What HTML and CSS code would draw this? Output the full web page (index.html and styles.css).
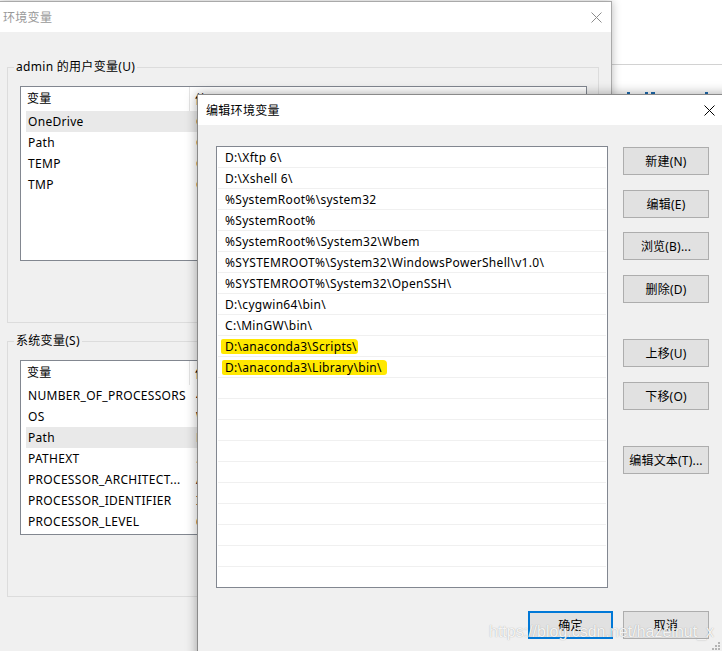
FILE: index.html
```html
<!DOCTYPE html>
<html lang="zh-CN">
<head>
<meta charset="utf-8">
<title>环境变量</title>
<link rel="stylesheet" href="styles.css">
</head>
<body>
<div class="desktop">
  <div class="behind">
    <div class="behind-top"></div>
    <div class="behind-marks"><span class="mk mk1"></span><span class="mk mk2"></span><span class="mk mk3"></span><span class="mk mk4"></span></div>
  </div>

  <section class="win env">
    <header class="titlebar env-bar">
      <span class="title env-title">环境变量</span>
      <span class="close env-close"><svg width="11" height="11" viewBox="0 0 11 11"><path d="M0.5 0.5L10.5 10.5M10.5 0.5L0.5 10.5" stroke="#8c8c8c" stroke-width="1" fill="none"/></svg></span>
    </header>
    <div class="env-body">
      <fieldset class="group">
        <legend>admin 的用户变量(U)</legend>
        <div class="lv lv-user">
          <div class="lv-head"><span class="c1">变量</span><span class="c2">值</span></div>
          <div class="lv-row sel"><span class="c1">OneDrive</span><span class="c2">C:</span></div>
          <div class="lv-row"><span class="c1">Path</span><span class="c2">C:</span></div>
          <div class="lv-row"><span class="c1">TEMP</span><span class="c2">C:</span></div>
          <div class="lv-row"><span class="c1">TMP</span><span class="c2">C:</span></div>
        </div>
      </fieldset>
      <fieldset class="group group-sys">
        <legend>系统变量(S)</legend>
        <div class="lv lv-sys">
          <div class="lv-head"><span class="c1">变量</span><span class="c2">值</span></div>
          <div class="lv-row"><span class="c1">NUMBER_OF_PROCESSORS</span><span class="c2">4</span></div>
          <div class="lv-row"><span class="c1">OS</span><span class="c2">W</span></div>
          <div class="lv-row sel"><span class="c1">Path</span><span class="c2">D</span></div>
          <div class="lv-row"><span class="c1">PATHEXT</span><span class="c2">.</span></div>
          <div class="lv-row"><span class="c1">PROCESSOR_ARCHITECT...</span><span class="c2">A</span></div>
          <div class="lv-row"><span class="c1">PROCESSOR_IDENTIFIER</span><span class="c2">I</span></div>
          <div class="lv-row"><span class="c1">PROCESSOR_LEVEL</span><span class="c2">6</span></div>
        </div>
      </fieldset>
    </div>
  </section>

  <section class="win edit">
    <header class="titlebar edit-bar">
      <span class="title">编辑环境变量</span>
      <span class="close edit-close"><svg width="11" height="11" viewBox="0 0 11 11"><path d="M0.5 0.5L10.5 10.5M10.5 0.5L0.5 10.5" stroke="#000" stroke-width="1" fill="none"/></svg></span>
    </header>
    <div class="edit-body">
      <div class="pathlist">
        <div class="p-row">D:\Xftp 6\</div>
        <div class="p-row">D:\Xshell 6\</div>
        <div class="p-row">%SystemRoot%\system32</div>
        <div class="p-row">%SystemRoot%</div>
        <div class="p-row">%SystemRoot%\System32\Wbem</div>
        <div class="p-row">%SYSTEMROOT%\System32\WindowsPowerShell\v1.0\</div>
        <div class="p-row">%SYSTEMROOT%\System32\OpenSSH\</div>
        <div class="p-row">D:\cygwin64\bin\</div>
        <div class="p-row">C:\MinGW\bin\</div>
        <div class="p-row"><span class="hl">D:\anaconda3\Scripts\</span></div>
        <div class="p-row"><span class="hl hl2">D:\anaconda3\Library\bin\</span></div>
        <div class="p-row"></div>
        <div class="p-row"></div>
        <div class="p-row"></div>
        <div class="p-row"></div>
        <div class="p-row"></div>
        <div class="p-row"></div>
        <div class="p-row"></div>
        <div class="p-row"></div>
        <div class="p-row"></div>
        <div class="p-row"></div>
      </div>
      <div class="side">
        <button class="btn">新建(N)</button>
        <button class="btn">编辑(E)</button>
        <button class="btn">浏览(B)...</button>
        <button class="btn">删除(D)</button>
        <button class="btn btn-sep">上移(U)</button>
        <button class="btn">下移(O)</button>
        <button class="btn btn-sep">编辑文本(T)...</button>
      </div>
      <div class="footer">
        <button class="btn btn-ok">确定</button>
        <button class="btn">取消</button>
      </div>
    </div>
  </section>

  <div class="watermark">https://blog.csdn.net/hazelnut_x</div>
  <svg class="grip" width="8" height="8" viewBox="0 0 8 8"><rect x="6" y="0" width="2" height="2" fill="#b4b4b4"/><rect x="3" y="3" width="2" height="2" fill="#b4b4b4"/><rect x="6" y="3" width="2" height="2" fill="#b4b4b4"/><rect x="0" y="6" width="2" height="2" fill="#b4b4b4"/><rect x="3" y="6" width="2" height="2" fill="#b4b4b4"/><rect x="6" y="6" width="2" height="2" fill="#b4b4b4"/></svg>
</div>
</body>
</html>
```

FILE: styles.css
```css
* { box-sizing: border-box; }

html, body {
  margin: 0;
  padding: 0;
}

body {
  width: 722px;
  height: 651px;
  overflow: hidden;
  background: #fff;
  font-family: "Noto Sans", "Noto Sans CJK SC", sans-serif;
  font-size: 12px;
  letter-spacing: 0.3px;
  color: #000;
}

.desktop {
  position: relative;
  width: 722px;
  height: 651px;
  overflow: hidden;
  background: #fff;
}

/* app behind both windows (right strip) */
.behind {
  position: absolute;
  left: 611px;
  top: 0;
  width: 111px;
  height: 651px;
  background: #fff;
}
.behind-top {
  height: 65px;
  border-bottom: 1px solid #d2d2d2;
}
.behind-marks {
  display: flex;
  margin-top: 27px;
  height: 4px;
}
.mk {
  display: block;
  height: 4px;
  width: 3px;
  background: #1f6cb0;
}
.mk1 { margin-left: 16px; }
.mk2 { margin-left: 15px; }
.mk3 { margin-left: 3px; width: 4px; }
.mk4 { margin-left: 50px; }

/* windows */
.win {
  position: absolute;
  display: flex;
  flex-direction: column;
}

.env {
  left: -1px;
  top: 1px;
  width: 613px;
  height: 660px;
  border: 1px solid #a9a9a9;
  background: #f0f0f0;
  box-shadow: 0 0 9px rgba(0, 0, 0, 0.28);
}

.titlebar {
  display: flex;
  align-items: center;
  background: #fff;
  flex: none;
}

.env-bar {
  height: 30px;
  padding-left: 3px;
}
.env-title {
  color: #999;
}
.close {
  margin-left: auto;
  display: flex;
  align-items: center;
  justify-content: center;
}
.env-close {
  width: 30px;
  height: 30px;
}

.env-body {
  flex: 1;
  background: #f0f0f0;
  padding-top: 27px;
}

.group {
  margin: 0 0 0 7px;
  width: 592px;
  height: 264px;
  border: 1px solid #dcdcdc;
  padding: 11px 0 0 6px;
  min-inline-size: 0;
}
.group legend {
  padding: 0 2px;
  line-height: 16px;
  font-size: 12px;
}
.group-sys {
  margin-top: 10px;
}

.lv {
  margin-left: 6px;
  width: 567px;
  border: 1px solid #828790;
  background: #fff;
  overflow: hidden;
}
.lv-user { height: 175px; }
.lv-sys { height: 175px; }

.lv-head {
  display: flex;
  height: 24px;
  align-items: center;
}
.lv-head .c1 {
  width: 169px;
  height: 24px;
  line-height: 24px;
  padding-left: 6px;
  border-right: 1px solid #e5e5e5;
}
.lv-head .c2 {
  padding-left: 5px;
}

.lv-row {
  display: flex;
  height: 21px;
  line-height: 21px;
  margin-left: 5px;
  white-space: nowrap;
}
.lv-row.sel {
  background: #e9e9e9;
}
.lv-row .c1 {
  width: 164px;
  padding-left: 2px;
  overflow: hidden;
}
.lv-row .c2 {
  padding-left: 6px;
}

/* edit dialog */
.edit {
  left: 197px;
  top: 94px;
  width: 536px;
  height: 570px;
  border: 1px solid #8a8a8a;
  background: #f0f0f0;
  box-shadow: 0 0 11px rgba(0, 0, 0, 0.35);
}
.edit-bar {
  height: 30px;
  padding-left: 8px;
}
.edit-close {
  width: 46px;
  height: 30px;
}

.edit-body {
  display: grid;
  grid-template-columns: 392px 86px;
  column-gap: 15px;
  align-items: start;
  padding: 21px 0 0 18px;
}

.pathlist {
  width: 392px;
  height: 442px;
  border: 1px solid #828790;
  background: #fff;
  padding: 0 1px;
  overflow: hidden;
}
.p-row {
  height: 21px;
  line-height: 20px;
  padding-top: 1px;
  border-bottom: 1px solid #f0f0f0;
  padding-left: 7px;
  white-space: nowrap;
}
.hl {
  display: inline-block;
  background: #ffe800;
  line-height: 15px;
  vertical-align: top;
  margin-top: 2px;
  margin-left: -4px;
  padding: 0 1px 0 4px;
  border-radius: 2px 4px 3px 2px;
}
.hl2 {
  padding-right: 5px;
  margin-left: -3px;
  padding-left: 3px;
}

.side {
  display: flex;
  flex-direction: column;
  gap: 14.5px;
  padding-top: 1px;
}

.btn {
  display: block;
  width: 86px;
  height: 28px;
  margin: 0;
  padding: 0;
  border: 1px solid #adadad;
  background: #e1e1e1;
  font-family: "Noto Sans", "Noto Sans CJK SC", sans-serif;
  font-size: 12px;
  letter-spacing: 0.2px;
  color: #000;
  text-align: center;
}
.btn-sep {
  margin-top: 22px;
}

.footer {
  grid-column: 1 / span 2;
  display: flex;
  justify-content: flex-end;
  gap: 10px;
  margin-top: 23px;
}
.btn-ok {
  width: 85px;
  border: 2px solid #0078d7;
}

.watermark {
  position: absolute;
  left: 489px;
  top: 622px;
  font-family: "Liberation Sans", Arial, sans-serif;
  font-size: 16px;
  line-height: 20px;
  letter-spacing: 0;
  color: rgba(255, 255, 255, 0.9);
  text-shadow: 0 0 1px rgba(90, 90, 90, 0.55);
  white-space: nowrap;
}

.grip {
  position: absolute;
  right: 2px;
  bottom: 1px;
}
```
